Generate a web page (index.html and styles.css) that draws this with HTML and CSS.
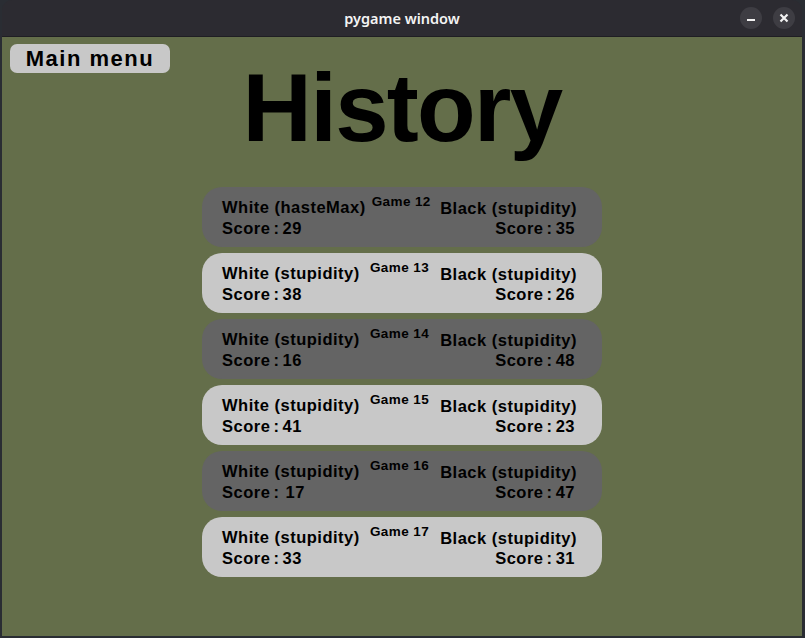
FILE: index.html
```html
<!DOCTYPE html>
<html>
<head>
<meta charset="utf-8">
<link rel="stylesheet" href="styles.css">
</head>
<body>
<div class="window">
  <div class="titlebar">
    <span class="title">pygame window</span>
    <div class="controls">
      <span class="ctl"><svg width="22" height="22" viewBox="0 0 22 22"><rect x="7" y="12" width="8" height="2" fill="#f2f2f2"/></svg></span>
      <span class="ctl"><svg width="22" height="22" viewBox="0 0 22 22"><path d="M7.5 7.5 L14.5 14.5 M14.5 7.5 L7.5 14.5" stroke="#f2f2f2" stroke-width="2.2"/></svg></span>
    </div>
  </div>
  <div class="content">
    <div class="menu-btn">Main menu</div>
    <h1 class="heading">History</h1>
    <div class="list">
      <div class="card dark">
        <div class="side left"><div>White (hasteMax)</div><div class="score">Score : 29</div></div>
        <div class="game">Game 12</div>
        <div class="side right"><div>Black (stupidity)</div><div class="score">Score : 35</div></div>
      </div>
      <div class="card light">
        <div class="side left"><div>White (stupidity)</div><div class="score">Score : 38</div></div>
        <div class="game">Game 13</div>
        <div class="side right"><div>Black (stupidity)</div><div class="score">Score : 26</div></div>
      </div>
      <div class="card dark">
        <div class="side left"><div>White (stupidity)</div><div class="score">Score : 16</div></div>
        <div class="game">Game 14</div>
        <div class="side right"><div>Black (stupidity)</div><div class="score">Score : 48</div></div>
      </div>
      <div class="card light">
        <div class="side left"><div>White (stupidity)</div><div class="score">Score : 41</div></div>
        <div class="game">Game 15</div>
        <div class="side right"><div>Black (stupidity)</div><div class="score">Score : 23</div></div>
      </div>
      <div class="card dark">
        <div class="side left"><div>White (stupidity)</div><div class="score">Score :&nbsp; 17</div></div>
        <div class="game">Game 16</div>
        <div class="side right"><div>Black (stupidity)</div><div class="score">Score : 47</div></div>
      </div>
      <div class="card light">
        <div class="side left"><div>White (stupidity)</div><div class="score">Score : 33</div></div>
        <div class="game">Game 17</div>
        <div class="side right"><div>Black (stupidity)</div><div class="score">Score : 31</div></div>
      </div>
    </div>
  </div>
</div>
</body>
</html>
```

FILE: styles.css
```css
html, body {
  margin: 0;
  padding: 0;
}
body {
  background: #2a2d33;
  width: 805px;
  height: 638px;
  overflow: hidden;
}
.window {
  margin-left: 2px;
  width: 800px;
  height: 636px;
  border-radius: 10px 10px 0 0;
  overflow: hidden;
  display: flex;
  flex-direction: column;
}
.titlebar {
  height: 36px;
  flex: none;
  background: #2c2b31;
  border-bottom: 1px solid #1f1e23;
  display: flex;
  align-items: center;
  justify-content: center;
  position: relative;
}
.title {
  color: #f4f4f4;
  font-family: "Noto Sans", sans-serif;
  font-weight: 600;
  font-size: 14.5px;
}
.controls {
  position: absolute;
  right: 7px;
  top: 7px;
  display: flex;
  gap: 11px;
}
.ctl {
  width: 22px;
  height: 22px;
  border-radius: 50%;
  background: #3e3d43;
  display: block;
}
.ctl svg { display: block; }
.content {
  flex: 1;
  background: #646e4a;
  padding-top: 7px;
  font-family: "Liberation Sans", Arial, sans-serif;
  font-weight: bold;
  color: #000;
}
.menu-btn {
  margin-left: 8px;
  width: 160px;
  height: 29px;
  box-sizing: border-box;
  background: #c8c8c8;
  border-radius: 7px;
  font-size: 22px;
  line-height: 29px;
  letter-spacing: 1.5px;
  text-align: center;
}
.heading {
  margin: -13px 0 0 0;
  font-size: 96px;
  line-height: 96px;
  letter-spacing: -1.7px;
  text-align: center;
  font-weight: bold;
}
.list {
  width: 400px;
  margin: 31px auto 0;
  display: flex;
  flex-direction: column;
  gap: 6px;
}
.card {
  height: 60px;
  box-sizing: border-box;
  border-radius: 20px;
  padding: 10px 25px 10px 20px;
  display: grid;
  grid-template-columns: 1fr auto 1fr;
  font-size: 16.5px;
  line-height: 20px;
  letter-spacing: 0.5px;
}
.card.dark { background: #646464; }
.card.light { background: #c8c8c8; }
.side { white-space: nowrap; }
.side.right { text-align: right; padding-top: 1px; }
.side.left .score { padding-top: 1px; }
.side.right .score { padding-right: 2px; }
.score { word-spacing: -2px; }
.game {
  font-size: 13.5px;
  line-height: 13px;
  letter-spacing: 0.4px;
  margin-top: -2px;
  padding: 0 6px;
}
```
